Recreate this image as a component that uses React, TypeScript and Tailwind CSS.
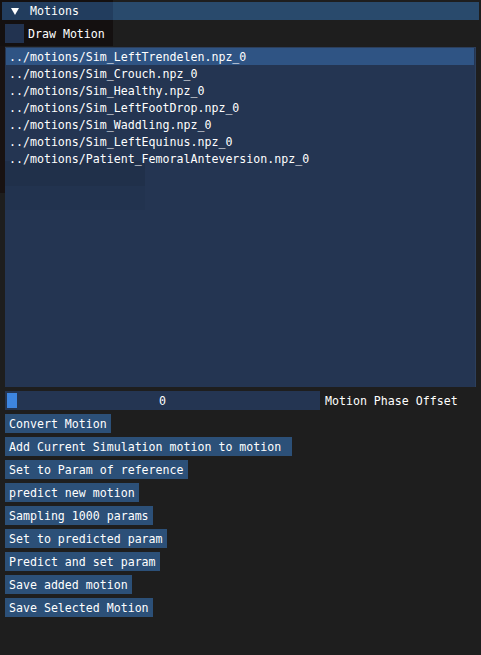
import React from 'react';

const motions = [
  '../motions/Sim_LeftTrendelen.npz_0',
  '../motions/Sim_Crouch.npz_0',
  '../motions/Sim_Healthy.npz_0',
  '../motions/Sim_LeftFootDrop.npz_0',
  '../motions/Sim_Waddling.npz_0',
  '../motions/Sim_LeftEquinus.npz_0',
  '../motions/Patient_FemoralAnteversion.npz_0',
];

const buttons = [
  'Convert Motion',
  'Add Current Simulation motion to motion ',
  'Set to Param of reference',
  'predict new motion',
  'Sampling 1000 params',
  'Set to predicted param',
  'Predict and set param',
  'Save added motion',
  'Save Selected Motion',
];

const Button: React.FC<{ label: string }> = ({ label }) => (
  <div className="flex">
    <div className="h-[19px] px-[4px] pt-[2px] flex items-center bg-[#2c5078] text-white whitespace-pre">{label}</div>
  </div>
);

export default function App() {
  return (
    <div
      className="relative w-[481px] h-[655px] bg-[#1e1e1e] text-white overflow-hidden text-[11.6px] leading-none"
      style={{ fontFamily: '"DejaVu Sans Mono", "Liberation Mono", monospace' }}
    >
      {/* ghost of a window behind */}
      <div className="absolute left-0 top-0 w-[113px] h-[46px] bg-[#141010]" />
      <div className="absolute left-0 top-[46px] w-[5px] h-[147px] bg-[#181212]" />

      <div className="relative flex flex-col pt-[2px]">
        {/* collapsing header */}
        <div className="mx-[2px] h-[18px] flex items-center bg-[#294a6c] relative pt-[2px]">
          <div className="absolute left-0 top-0 w-[111px] h-full bg-[#223d5e]" />
          <svg className="relative ml-[9px] -mt-[2px]" width="8" height="7" viewBox="0 0 8 7">
            <polygon points="0,0 8,0 4,7" fill="#ffffff" />
          </svg>
          <span className="relative ml-[11px]">Motions</span>
        </div>

        {/* checkbox */}
        <div className="mt-[4px] ml-[5px] h-[19px] flex items-center">
          <div className="w-[19px] h-[19px] bg-[#223350]" />
          <span className="ml-[4px] pt-[2px]">Draw Motion</span>
        </div>

        {/* list box */}
        <div className="relative mt-[4px] ml-[5px] w-[471px] h-[340px] bg-[#243552] border-t border-r border-[#2c3f5c] px-[1px]">
          <div className="absolute left-0 top-[113px] w-[140px] h-[25px] bg-[#20304a]" />
          <div className="absolute left-0 top-[138px] w-[140px] h-[24px] bg-[#22334f]" />
          {motions.map((m, i) => (
            <div
              key={m}
              className={`relative h-[17px] flex items-center pl-[3px] pt-[2px] whitespace-pre ${i === 0 ? 'bg-[#2f5484]' : ''}`}
            >
              {m}
            </div>
          ))}
        </div>

        {/* slider */}
        <div className="mt-[4px] ml-[5px] h-[19px] flex items-center">
          <div className="relative w-[315px] h-[19px] bg-[#243552] flex items-center justify-center pt-[2px]">
            <div className="absolute left-[2px] top-[2px] w-[10px] h-[15px] bg-[#3d85e0]" />
            <span>0</span>
          </div>
          <span className="ml-[5px] pt-[2px]">Motion Phase Offset</span>
        </div>

        {/* buttons */}
        <div className="mt-[4px] ml-[5px] flex flex-col gap-[4px]">
          {buttons.map((b) => (
            <Button key={b} label={b} />
          ))}
        </div>
      </div>
    </div>
  );
}
